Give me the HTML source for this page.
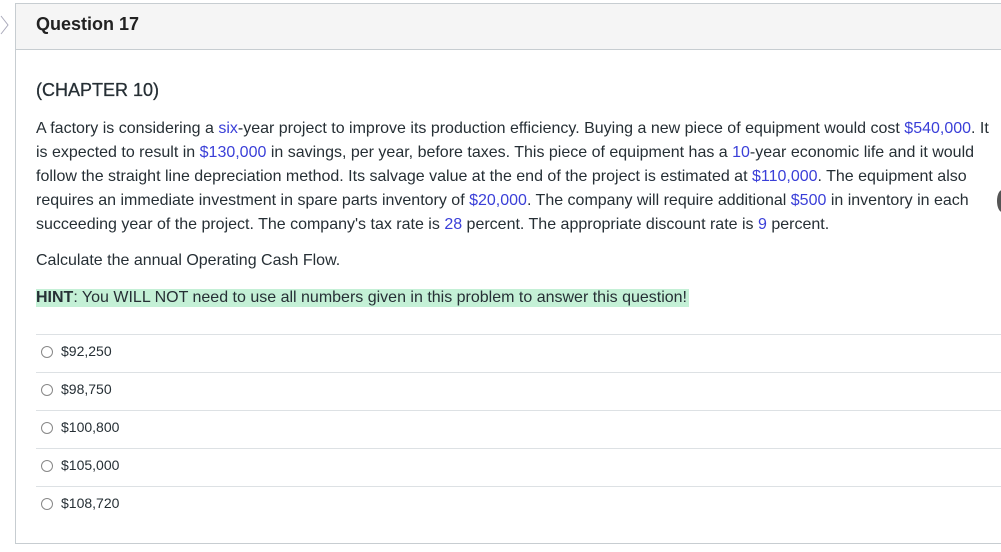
<!DOCTYPE html>
<html><head><meta charset="utf-8">
<style>
html,body{margin:0;padding:0;background:#fff;width:1001px;height:552px;overflow:hidden;font-family:"Liberation Sans",sans-serif;color:#2d3b45;}
.box{position:absolute;left:15px;top:3px;width:1000px;height:541px;border:1px solid #c7cdd1;border-right:none;box-sizing:border-box;}
.hdr{position:absolute;left:0;top:0;right:0;height:45px;background:#f5f5f5;border-bottom:1px solid #c7cdd1;}
.hdr span{position:absolute;left:20px;top:10px;font-size:18px;font-weight:bold;color:#222;}
.t{position:absolute;left:36px;white-space:nowrap;font-size:16px;color:#262f35;}
.b{color:#3a3fd8;}
.opt{position:absolute;left:36px;width:965px;height:1px;background:#dde1e4;}
.ans{position:absolute;left:41px;font-size:14px;color:#262f35;}
.ans i{display:inline-block;width:12px;height:12px;border:1px solid #888;border-radius:50%;vertical-align:-2px;margin-right:8px;box-sizing:border-box;}
</style></head><body>
<svg style="position:absolute;left:0;top:14px" width="10" height="22"><path d="M1 2 L8 11 L1 20" fill="none" stroke="#aab" stroke-width="1"/></svg>
<div class="box"><div class="hdr"><span>Question 17</span></div></div>
<div class="t" style="top:80px;font-size:18px;-webkit-text-stroke:0.3px #262f35;">(CHAPTER 10)</div>
<div class="t" style="top:120px;">A factory is considering a <span class="b">six</span>-year project to improve its production efficiency. Buying a new piece of equipment would cost <span class="b">$540,000</span>. It</div>
<div class="t" style="top:144px;">is expected to result in <span class="b">$130,000</span> in savings, per year, before taxes. This piece of equipment has a <span class="b">10</span>-year economic life and it would</div>
<div class="t" style="top:168px;">follow the straight line depreciation method. Its salvage value at the end of the project is estimated at <span class="b">$110,000</span>. The equipment also</div>
<div class="t" style="top:192px;">requires an immediate investment in spare parts inventory of <span class="b">$20,000</span>. The company will require additional <span class="b">$500</span> in inventory in each</div>
<div class="t" style="top:216px;">succeeding year of the project. The company's tax rate is <span class="b">28</span> percent. The appropriate discount rate is <span class="b">9</span> percent.</div>
<div class="t" style="top:252px;">Calculate the annual Operating Cash Flow.</div>
<div class="t" style="top:289px;background:#c4f0d6;padding-right:2px;"><b>HINT</b>: You WILL NOT need to use all numbers given in this problem to answer this question!</div>
<div style="position:absolute;left:997px;top:190px;width:10px;height:22px;border-radius:50%;background:#555;"></div>
<div class="opt" style="top:334px"></div>
<div class="ans" style="top:343px"><i></i>$92,250</div>
<div class="opt" style="top:372px"></div>
<div class="ans" style="top:381px"><i></i>$98,750</div>
<div class="opt" style="top:410px"></div>
<div class="ans" style="top:419px"><i></i>$100,800</div>
<div class="opt" style="top:448px"></div>
<div class="ans" style="top:457px"><i></i>$105,000</div>
<div class="opt" style="top:486px"></div>
<div class="ans" style="top:495px"><i></i>$108,720</div>
</body></html>
